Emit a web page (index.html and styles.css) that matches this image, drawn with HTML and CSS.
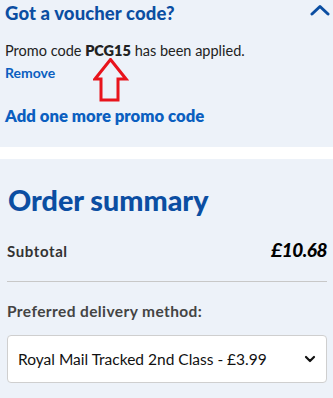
FILE: index.html
```html
<!DOCTYPE html>
<html>
<head>
<meta charset="utf-8">
<link rel="stylesheet" href="styles.css">
</head>
<body>
<section class="panel voucher">
  <div class="voucher-head">
    <h2 class="voucher-title">Got a voucher code?</h2>
    <svg class="chev-up" width="20" height="12" viewBox="0 0 20 12"><path d="M2 10 L10 2.5 L18 10" fill="none" stroke="#0b4ea2" stroke-width="3" stroke-linecap="round" stroke-linejoin="round"/></svg>
  </div>
  <p class="applied">Promo code <b>PCG15</b> has been applied.</p>
  <a class="remove">Remove</a>
  <svg class="arrow" width="36" height="44" viewBox="0 0 36 44"><path d="M17.5 1.5 L33 21 L25 21 L25 42 L8 42 L8 21 L2 21 Z" fill="none" stroke="#e8141c" stroke-width="3"/></svg>
  <a class="add-more">Add one more promo code</a>
</section>
<section class="panel summary">
  <h1 class="summary-title">Order summary</h1>
  <div class="row">
    <span class="label">Subtotal</span>
    <span class="price">£10.68</span>
  </div>
  <hr class="divider">
  <div class="delivery-label">Preferred delivery method:</div>
  <div class="select">
    <span>Royal Mail Tracked 2nd Class - £3.99</span>
    <svg width="12" height="8" viewBox="0 0 12 8"><path d="M2 2 L6 6 L10 2" fill="none" stroke="#111" stroke-width="2.2" stroke-linecap="round" stroke-linejoin="round"/></svg>
  </div>
</section>
</body>
</html>
```
FILE: styles.css
```css
html, body { margin: 0; padding: 0; background: #fff; }
body { font-family: Lato, "Noto Sans", sans-serif; width: 333px; height: 398px; overflow: hidden; }
.panel { background: #edf2f9; padding: 0 7px 0 5px; }
.voucher { height: 147px; box-sizing: border-box; padding-top: 1px; display: flex; flex-direction: column; }
.voucher-head { display: flex; justify-content: space-between; align-items: flex-start; }
.voucher-title { margin: 0; font-size: 18.5px; font-weight: 900; color: #0b4ea2; line-height: 24px; letter-spacing: 0.1px; }
.chev-up { margin-top: 3px; margin-right: -4px; }
.applied { margin: 17px 0 0; font-size: 14.5px; color: #222; line-height: 18px; }
.applied b { font-weight: 800; }
.remove { font-size: 14px; color: #0b5fc0; font-weight: 700; line-height: 16px; margin-top: 5px; }
.arrow { margin-left: 88px; margin-top: -23px; }
.add-more { font-size: 16.7px; font-weight: 800; color: #0b5fc0; line-height: 20px; margin-top: 4px; }
.summary { margin-top: 12px; height: 239px; padding: 1px 6px 0 7px; display: flex; flex-direction: column; }
.summary-title { margin: 24px 0 0 1px; font-size: 28.7px; font-weight: 900; color: #0b4ea2; line-height: 32px; }
.row { display: flex; justify-content: space-between; align-items: baseline; margin-top: 22px; }
.label { font-size: 15px; font-weight: 700; color: #333; letter-spacing: 0.6px; }
.price { font-size: 19px; font-weight: 900; font-style: italic; color: #000; letter-spacing: -0.5px; }
.divider { border: 0; border-top: 1px solid #c8c8c8; margin: 20px 0 0; }
.delivery-label { font-size: 15.5px; font-weight: 700; color: #444; margin-top: 20px; letter-spacing: 0.4px; }
.select { margin-top: 15px; height: 46px; background: #fff; border: 1px solid #cfcfcf; border-radius: 4px; display: flex; align-items: center; justify-content: space-between; padding: 0 10px 0 10px; font-size: 15.5px; color: #111; }
```
